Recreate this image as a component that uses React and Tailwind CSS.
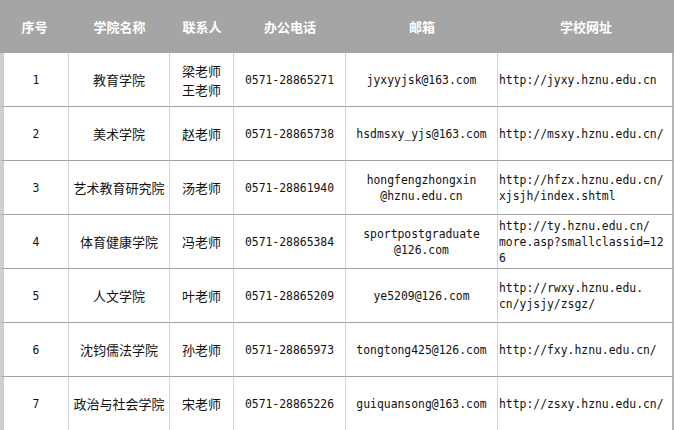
const rows = [
  { no: '1', name: '教育学院', contact: ['梁老师', '王老师'], phone: '0571-28865271', mail: ['jyxyyjsk@163.com'], url: ['http://jyxy.hznu.edu.cn'] },
  { no: '2', name: '美术学院', contact: ['赵老师'], phone: '0571-28865738', mail: ['hsdmsxy_yjs@163.com'], url: ['http://msxy.hznu.edu.cn/'] },
  { no: '3', name: '艺术教育研究院', contact: ['汤老师'], phone: '0571-28861940', mail: ['hongfengzhongxin', '@hznu.edu.cn'], url: ['http://hfzx.hznu.edu.cn/', 'xjsjh/index.shtml'] },
  { no: '4', name: '体育健康学院', contact: ['冯老师'], phone: '0571-28865384', mail: ['sportpostgraduate', '@126.com'], url: ['http://ty.hznu.edu.cn/', 'more.asp?smallclassid=12', '6'] },
  { no: '5', name: '人文学院', contact: ['叶老师'], phone: '0571-28865209', mail: ['ye5209@126.com'], url: ['http://rwxy.hznu.edu.', 'cn/yjsjy/zsgz/'] },
  { no: '6', name: '沈钧儒法学院', contact: ['孙老师'], phone: '0571-28865973', mail: ['tongtong425@126.com'], url: ['http://fxy.hznu.edu.cn/'] },
  { no: '7', name: '政治与社会学院', contact: ['宋老师'], phone: '0571-28865226', mail: ['guiquansong@163.com'], url: ['http://zsxy.hznu.edu.cn/'] },
]

const headers = ['序号', '学院名称', '联系人', '办公电话', '邮箱', '学校网址']

const cjk = "font-['Noto_Sans_CJK_SC',sans-serif] text-[13px] leading-[19px]"
const mono = "font-['DejaVu_Sans_Mono','Noto_Sans_CJK_SC',monospace] text-[11.4px] leading-[16px]"

// ─── Cell ─────────────────────────────────────────────────────────────────────
function Cell({ children, first, last, left, font }) {
  const edge = first ? 'border-l-4 border-l-[#cfcfcf]' : ''
  const right = last ? 'border-r-2 border-r-[#b5b5b5]' : 'border-r border-r-[#d2d2d2]'
  const align = left ? 'items-start text-left pl-[1px]' : 'items-center text-center'
  return (
    <div className={`h-[54px] flex flex-col justify-center border-b border-b-[#a3a3a3] ${edge} ${right} ${align} ${font} text-[#111]`}>
      {children}
    </div>
  )
}

function Lines({ items }) {
  return items.map((t, i) => <span key={i} className="whitespace-pre">{t}</span>)
}

export default function App() {
  return (
    <div className="w-[674px] h-[430px] overflow-hidden bg-white">
      <div className="grid grid-cols-[69px_101px_64px_112px_152px_176px]">
        {headers.map(h => (
          <div key={h}
            className={`h-[53px] bg-[#a5a5a5] flex items-center justify-center text-white font-bold ${cjk}`}>
            {h}
          </div>
        ))}
        {rows.map(r => (
          <div key={r.no} className="contents">
            <Cell first font={mono}>{r.no}</Cell>
            <Cell font={cjk}>{r.name}</Cell>
            <Cell font={cjk}><Lines items={r.contact} /></Cell>
            <Cell font={mono}>{r.phone}</Cell>
            <Cell font={mono}><Lines items={r.mail} /></Cell>
            <Cell last left font={mono}><Lines items={r.url} /></Cell>
          </div>
        ))}
      </div>
    </div>
  )
}
